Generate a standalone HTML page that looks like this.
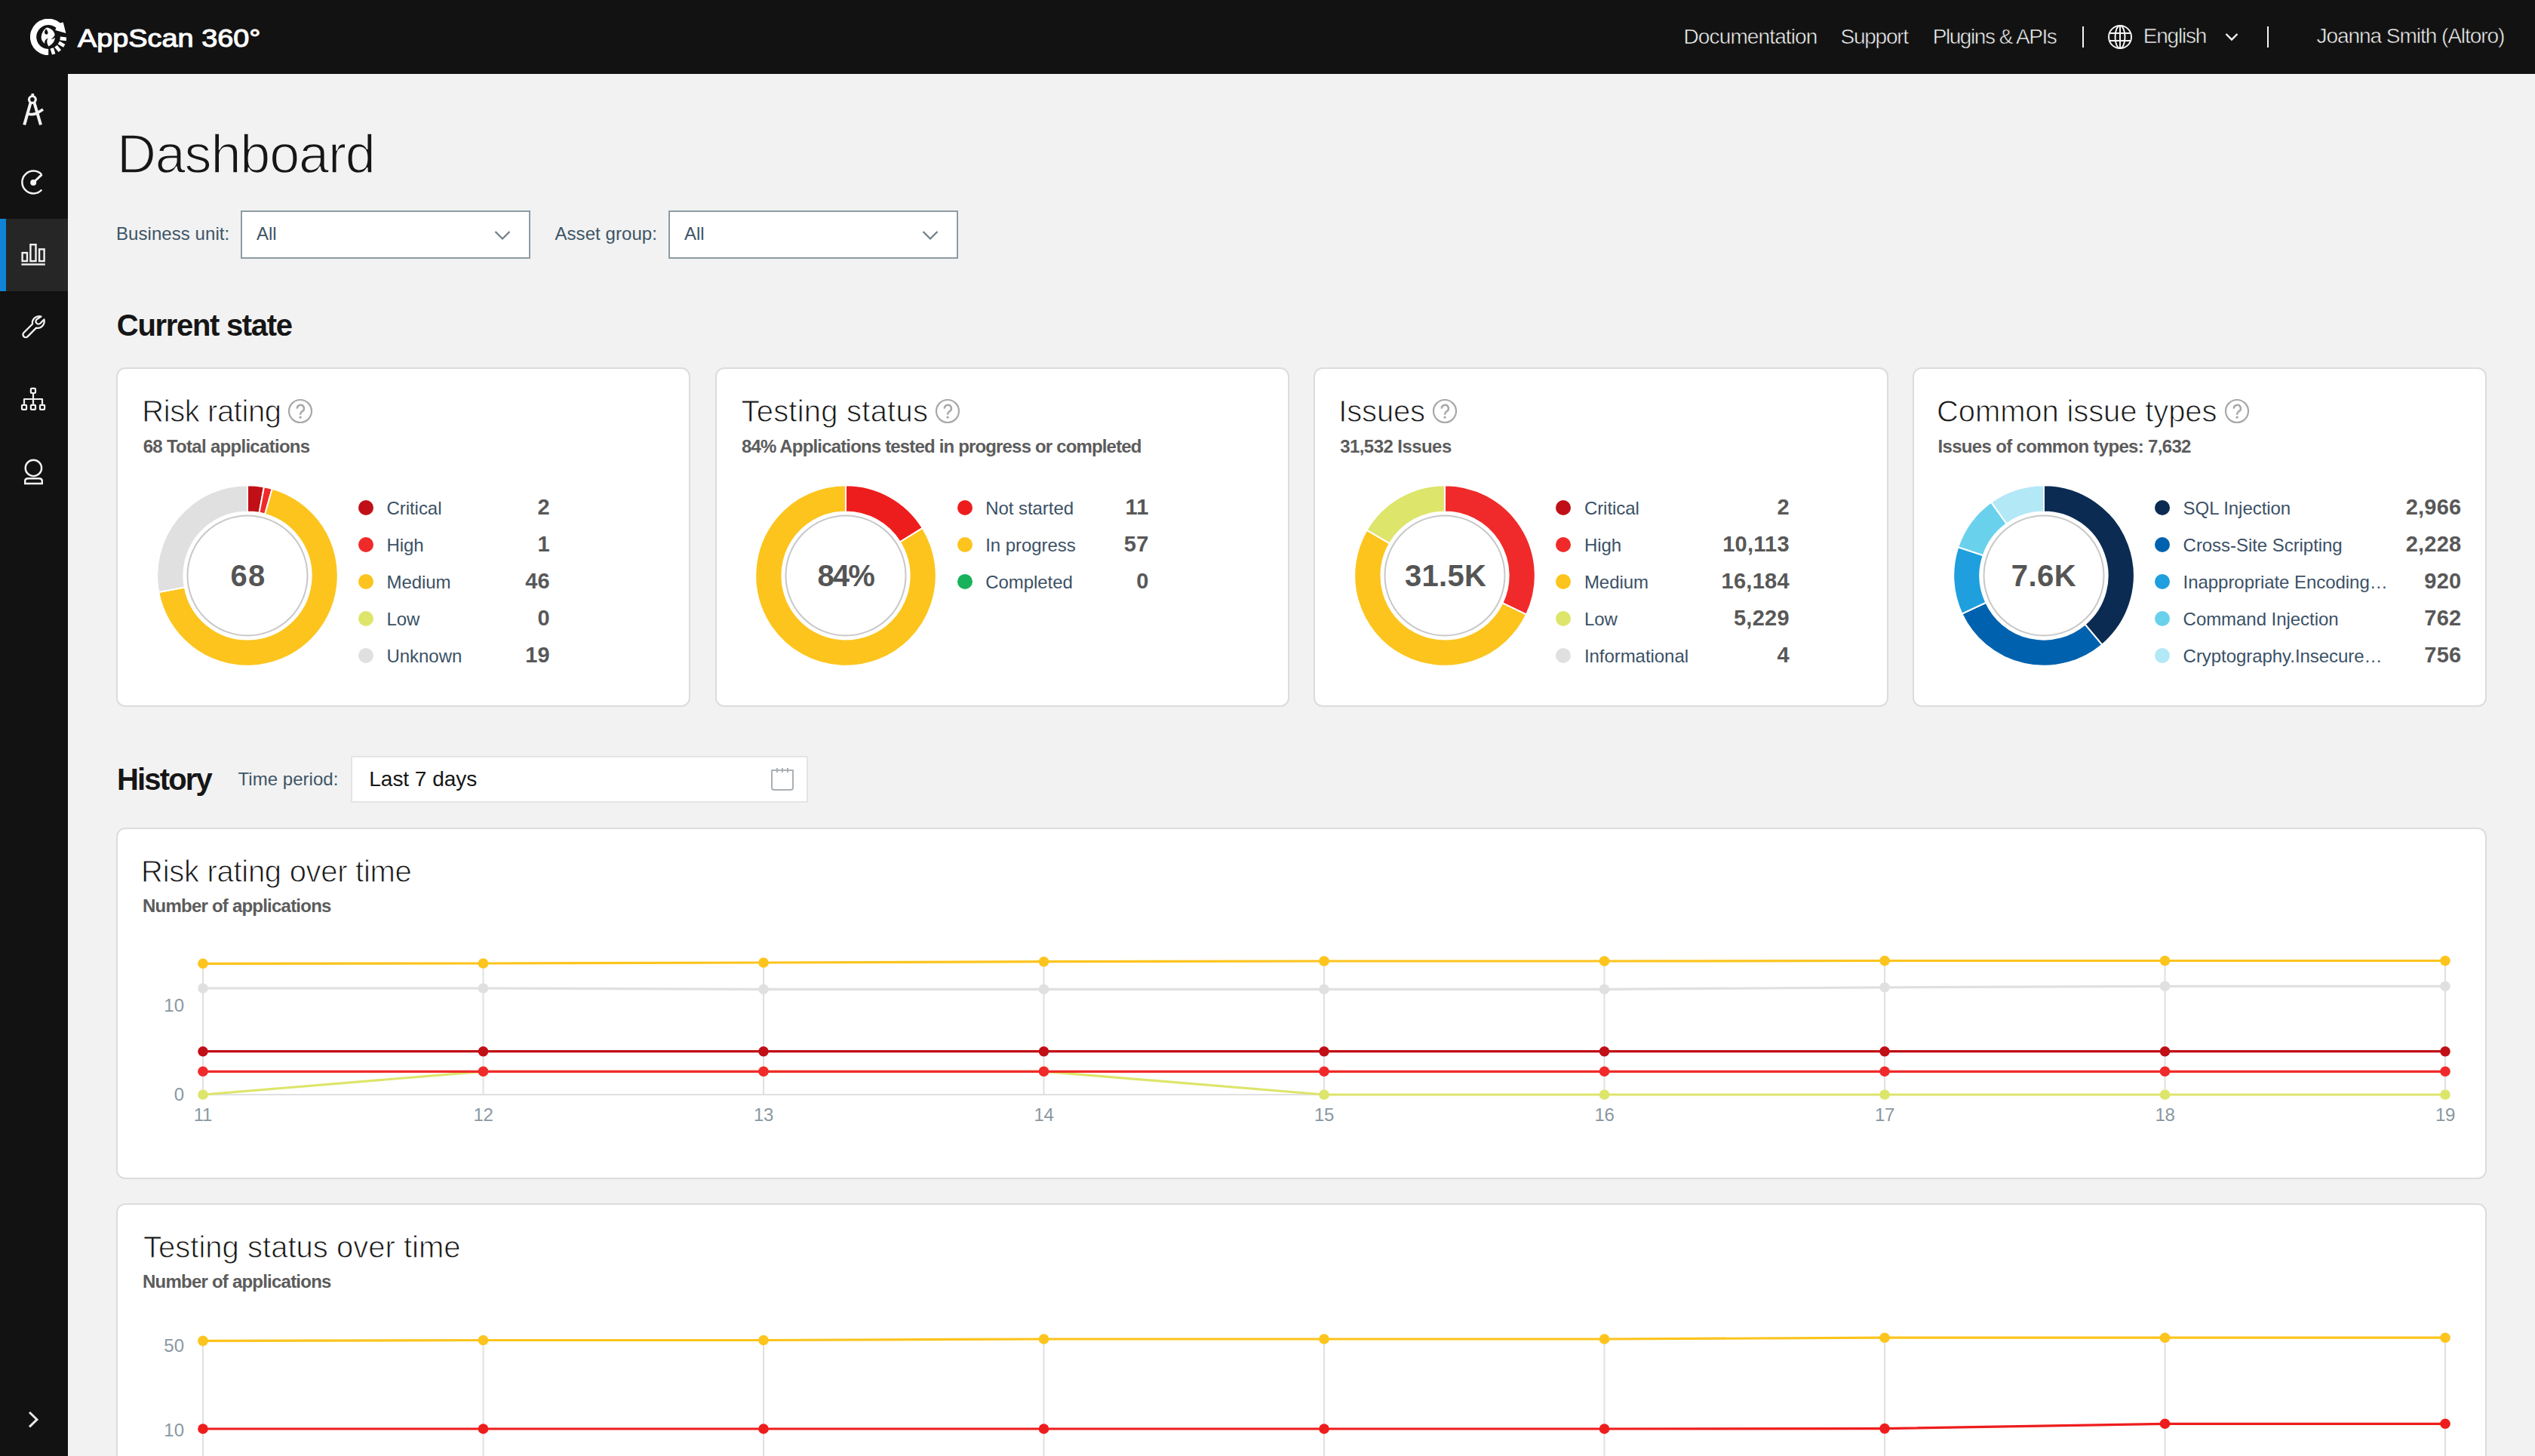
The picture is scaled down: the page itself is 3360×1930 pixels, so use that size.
<!DOCTYPE html>
<html><head><meta charset="utf-8"><style>
html,body{margin:0;padding:0;}
body{width:3360px;height:1930px;overflow:hidden;position:relative;background:#f2f2f2;font-family:"Liberation Sans", sans-serif;}
.t{position:absolute;white-space:nowrap;line-height:1;font-family:"Liberation Sans", sans-serif;}
</style></head><body>
<div style="position:absolute;left:0px;top:0px;width:3360px;height:98px;background:#121212"></div><div style="position:absolute;left:0px;top:98px;width:90px;height:1832px;background:#121212"></div><div style="position:absolute;left:0px;top:290px;width:90px;height:96px;background:#262626"></div><div style="position:absolute;left:0px;top:290px;width:8px;height:96px;background:#0f84d6"></div><svg style="position:absolute;left:40px;top:25px;" width="48" height="48" viewBox="0 0 48 48">
<path d="M 24.2 48.3 A 24.3 24.3 0 1 1 39.82 5.39 L 43.7 4.6 L 47.4 18.9 L 33.2 14.9 L 34.48 11.74 A 16 16 0 1 0 24.2 40.0 Z" fill="#fff"/>
<g stroke="#fff" stroke-width="4.6"><line x1="39.68" y1="25.90" x2="48.02" y2="26.92"/><line x1="37.84" y1="31.56" x2="45.19" y2="35.64"/><line x1="34.02" y1="36.12" x2="39.30" y2="42.65"/><line x1="28.76" y1="38.92" x2="31.22" y2="46.95"/></g>
<path d="M 22 11.4 C 28 12 33 17 33 23.5 C 33 30 28.5 34.5 24.5 36.4 C 22 33 21.5 29 23.5 25.5 C 20 27 18.5 30 19.5 33 C 15.5 30 14 26 15 22 C 16 17 19 13 22 11.4 Z" fill="#fff"/>
<path d="M 21.5 13.5 C 18.5 15.5 18.3 19.5 20.8 20.6 C 22.8 21.3 24.2 19.3 23.4 17.3 C 22.9 16 22.2 14.8 21.5 13.5 Z" fill="#121212"/>
<path d="M 33.2 20.5 C 31.6 24 29.8 25.8 27.6 26.6 C 30.5 27.2 32.8 25.6 33.6 23.2 Z" fill="#121212"/>
</svg><div class="t" style="left:103.15px;top:32.8px;font-size:34px;color:#fff;font-weight:400;letter-spacing:0.000px;-webkit-text-stroke:1.1px #fff;transform:scaleX(1.1135);transform-origin:0 0">AppScan 360°</div><div class="t" style="left:2231.50px;top:34.6px;font-size:28px;color:#f4f4f4;font-weight:400;letter-spacing:-0.871px;-webkit-text-stroke:0.6px #121212">Documentation</div><div class="t" style="left:2439.60px;top:34.6px;font-size:28px;color:#f4f4f4;font-weight:400;letter-spacing:-1.265px;-webkit-text-stroke:0.6px #121212">Support</div><div class="t" style="left:2561.70px;top:34.6px;font-size:28px;color:#f4f4f4;font-weight:400;letter-spacing:-1.431px;-webkit-text-stroke:0.6px #121212">Plugins &amp; APIs</div><div style="position:absolute;left:2760px;top:35px;width:2px;height:28px;background:#f4f4f4"></div><svg style="position:absolute;left:2794px;top:33px;" width="32" height="32" viewBox="0 0 32 32"><g fill="none" stroke="#f4f4f4" stroke-width="2">
<circle cx="16" cy="16" r="15"/><ellipse cx="16" cy="16" rx="6.5" ry="15"/>
<line x1="16" y1="1" x2="16" y2="31"/><line x1="1" y1="11" x2="31" y2="11"/><line x1="1" y1="21" x2="31" y2="21"/></g></svg><div class="t" style="left:2840.70px;top:34.2px;font-size:28px;color:#f4f4f4;font-weight:400;letter-spacing:-1.210px;-webkit-text-stroke:0.6px #121212">English</div><svg style="position:absolute;left:2949px;top:43px;" width="18" height="12" viewBox="0 0 18 12"><path d="M1.5 2 L9 9.5 L16.5 2" fill="none" stroke="#f4f4f4" stroke-width="2.4"/></svg><div style="position:absolute;left:3005px;top:35px;width:2px;height:28px;background:#f4f4f4"></div><div class="t" style="left:3070.60px;top:34.2px;font-size:28px;color:#f4f4f4;font-weight:400;letter-spacing:-1.053px;-webkit-text-stroke:0.6px #121212">Joanna Smith (Altoro)</div><svg style="position:absolute;left:20px;top:115px;" width="50" height="60" viewBox="0 0 50 60"><g fill="none" stroke="#f2f2f2" stroke-width="3.6">
<line x1="23.3" y1="9" x2="23.3" y2="14"/>
<circle cx="22.9" cy="16.9" r="4.4" stroke-width="3.2"/>
<line x1="20.6" y1="21" x2="12.2" y2="50.5" stroke-width="4"/>
<line x1="25.4" y1="21" x2="34" y2="50.5" stroke-width="4"/>
<path d="M 17.5 36 Q 24 37.5 29 35 L 37 30" stroke-width="3.8"/>
</g></svg><svg style="position:absolute;left:20px;top:215px;" width="50" height="50" viewBox="0 0 50 50"><g fill="none" stroke="#f2f2f2" stroke-width="2.5">
<path d="M 35.3 16.5 A 14.9 14.9 0 1 0 35.3 36.5"/>
<line x1="24.2" y1="27" x2="35.5" y2="16.3" stroke-width="3"/>
</g><circle cx="24.2" cy="27" r="4" fill="#f2f2f2"/></svg><svg style="position:absolute;left:20px;top:310px;" width="50" height="50" viewBox="0 0 50 50"><g fill="none" stroke="#f2f2f2" stroke-width="2.4">
<rect x="9.6" y="25.1" width="6.4" height="11.0"/>
<rect x="20.4" y="14.2" width="7.1" height="21.9"/>
<rect x="32.1" y="20.4" width="6.5" height="15.7"/>
<line x1="8.4" y1="40.5" x2="39.8" y2="40.5"/>
</g></svg><svg style="position:absolute;left:20px;top:408px;" width="50" height="50" viewBox="0 0 50 50"><g fill="none" stroke="#f2f2f2" stroke-width="2.3" stroke-linejoin="round">
<path d="M 34.5 11.5 A 9 9 0 0 0 23 21.5 L 11.5 33 A 3.6 3.6 0 0 0 16.6 38.1 L 28 26.6 A 9 9 0 0 0 38.4 15.5 L 33.5 20.5 A 3.5 3.5 0 0 1 28.5 15.5 Z"/>
</g></svg><svg style="position:absolute;left:20px;top:503px;" width="50" height="50" viewBox="0 0 50 50"><g fill="none" stroke="#f2f2f2" stroke-width="2.2" stroke-linejoin="round">
<rect x="20.9" y="11.9" width="6.1" height="6.1" rx="1"/>
<rect x="9" y="33.8" width="6.1" height="6.1" rx="1"/>
<rect x="20.9" y="33.8" width="6.1" height="6.1" rx="1"/>
<rect x="33" y="33.8" width="6.1" height="6.1" rx="1"/>
<path d="M 24 19 L 24 32.7 M 12 32.7 L 12 26 L 36 26 L 36 32.7"/>
</g></svg><svg style="position:absolute;left:20px;top:600px;" width="50" height="50" viewBox="0 0 50 50"><g fill="none" stroke="#f2f2f2" stroke-width="2.4">
<circle cx="24.4" cy="20.4" r="10.7"/>
<path d="M 13.2 41 L 13.2 37.5 Q 13.2 34.2 17 34.2 L 32 34.2 Q 35.8 34.2 35.8 37.5 L 35.8 41 Z"/>
</g></svg><svg style="position:absolute;left:30px;top:1865px;" width="30" height="34" viewBox="0 0 30 34"><path d="M 9 7 L 19 16.7 L 9 26.4" fill="none" stroke="#e8e8e8" stroke-width="3"/></svg><div class="t" style="left:154.90px;top:167.8px;font-size:72px;color:#161616;font-weight:400;letter-spacing:-1.161px;-webkit-text-stroke:1.6px #f2f2f2">Dashboard</div><div class="t" style="left:154.00px;top:298.4px;font-size:24px;color:#3d5566;font-weight:400;letter-spacing:0.058px;">Business unit:</div><div style="position:absolute;left:319px;top:279px;width:384px;height:64px;background:#fff;border:2px solid #8d9ba4;box-sizing:border-box"></div><div class="t" style="left:340.0px;top:298.4px;font-size:24px;color:#3d5566;font-weight:400;letter-spacing:0px;">All</div><svg style="position:absolute;left:654.5px;top:300px;" width="22" height="22" viewBox="0 0 22 22"><path d="M 1.5 7 L 11 16.5 L 20.5 7" fill="none" stroke="#6f7d86" stroke-width="2.2"/></svg><div class="t" style="left:735.50px;top:298.4px;font-size:24px;color:#3d5566;font-weight:400;letter-spacing:0.057px;">Asset group:</div><div style="position:absolute;left:886px;top:279px;width:384px;height:64px;background:#fff;border:2px solid #8d9ba4;box-sizing:border-box"></div><div class="t" style="left:907.0px;top:298.4px;font-size:24px;color:#3d5566;font-weight:400;letter-spacing:0px;">All</div><svg style="position:absolute;left:1222px;top:300px;" width="22" height="22" viewBox="0 0 22 22"><path d="M 1.5 7 L 11 16.5 L 20.5 7" fill="none" stroke="#6f7d86" stroke-width="2.2"/></svg><div class="t" style="left:154.80px;top:410.9px;font-size:40px;color:#161616;font-weight:700;letter-spacing:-1.308px;">Current state</div><div style="position:absolute;left:154.0px;top:487px;width:761.3px;height:450px;background:#fff;border:2px solid #dcdcdc;border-radius:12px;box-sizing:border-box"></div><div class="t" style="left:188.35px;top:525.0px;font-size:40px;color:#161616;font-weight:400;letter-spacing:-0.430px;-webkit-text-stroke:0.9px #fff">Risk rating</div><div class="t" style="left:189.70px;top:579.6px;font-size:24px;color:#5c5c5c;font-weight:700;letter-spacing:-0.708px;">68 Total applications</div><svg style="position:absolute;left:381px;top:527.8px;" width="34" height="34" viewBox="0 0 34 34"><circle cx="17" cy="17" r="15" fill="none" stroke="#a8a8a8" stroke-width="2.2"/><path d="M 12.9 13.6 A 4.5 4.5 0 1 1 19.5 17.3 C 17.9 18.4 17.1 19.2 17.1 21 L 17.1 21.8" fill="none" stroke="#a8a8a8" stroke-width="2.6"/><circle cx="17.1" cy="25.2" r="1.6" fill="#a8a8a8"/></svg><svg style="position:absolute;left:197.7px;top:633px;" width="260" height="260" viewBox="0 0 260 260"><path d="M130.00 10.20 A119.8 119.8 0 0 1 152.01 12.24 L145.55 46.84 A84.6 84.6 0 0 0 130.00 45.40 Z" fill="#c00f17" stroke="#fff" stroke-width="2"/><path d="M152.01 12.24 A119.8 119.8 0 0 1 162.78 14.77 L153.15 48.63 A84.6 84.6 0 0 0 145.55 46.84 Z" fill="#f02a2a" stroke="#fff" stroke-width="2"/><path d="M162.78 14.77 A119.8 119.8 0 1 1 12.24 152.01 L46.84 145.55 A84.6 84.6 0 1 0 153.15 48.63 Z" fill="#fcc41d" stroke="#fff" stroke-width="2"/><path d="M12.24 152.01 A119.8 119.8 0 0 1 130.00 10.20 L130.00 45.40 A84.6 84.6 0 0 0 46.84 145.55 Z" fill="#e0e0e0" stroke="#fff" stroke-width="2"/><circle cx="130" cy="130" r="79.5" fill="#fff" stroke="#c8c8c8" stroke-width="2"/></svg><div class="t" style="left:305.50px;top:742.7px;font-size:40px;color:#555;font-weight:700;letter-spacing:1.254px;">68</div><div style="position:absolute;left:475.0px;top:663px;width:20px;height:20px;background:#c00f17;border-radius:50%"></div><div class="t" style="left:512.5px;top:661.7px;font-size:24px;color:#3b5166;font-weight:400;letter-spacing:-0.05px;">Critical</div><div class="t" style="right:2631.1px;top:658.3px;font-size:29px;color:#585858;font-weight:700;letter-spacing:0.25px;">2</div><div style="position:absolute;left:475.0px;top:712px;width:20px;height:20px;background:#f02a2a;border-radius:50%"></div><div class="t" style="left:512.5px;top:710.7px;font-size:24px;color:#3b5166;font-weight:400;letter-spacing:-0.05px;">High</div><div class="t" style="right:2631.1px;top:707.3px;font-size:29px;color:#585858;font-weight:700;letter-spacing:0.25px;">1</div><div style="position:absolute;left:475.0px;top:761px;width:20px;height:20px;background:#fcc41d;border-radius:50%"></div><div class="t" style="left:512.5px;top:759.7px;font-size:24px;color:#3b5166;font-weight:400;letter-spacing:-0.05px;">Medium</div><div class="t" style="right:2631.1px;top:756.3px;font-size:29px;color:#585858;font-weight:700;letter-spacing:0.25px;">46</div><div style="position:absolute;left:475.0px;top:810px;width:20px;height:20px;background:#dde56b;border-radius:50%"></div><div class="t" style="left:512.5px;top:808.7px;font-size:24px;color:#3b5166;font-weight:400;letter-spacing:-0.05px;">Low</div><div class="t" style="right:2631.1px;top:805.3px;font-size:29px;color:#585858;font-weight:700;letter-spacing:0.25px;">0</div><div style="position:absolute;left:475.0px;top:859px;width:20px;height:20px;background:#e0e0e0;border-radius:50%"></div><div class="t" style="left:512.5px;top:857.7px;font-size:24px;color:#3b5166;font-weight:400;letter-spacing:-0.05px;">Unknown</div><div class="t" style="right:2631.1px;top:854.3px;font-size:29px;color:#585858;font-weight:700;letter-spacing:0.25px;">19</div><div style="position:absolute;left:947.7px;top:487px;width:761.3px;height:450px;background:#fff;border:2px solid #dcdcdc;border-radius:12px;box-sizing:border-box"></div><div class="t" style="left:982.45px;top:525.0px;font-size:40px;color:#161616;font-weight:400;letter-spacing:0.225px;-webkit-text-stroke:0.9px #fff">Testing status</div><div class="t" style="left:982.90px;top:579.6px;font-size:24px;color:#5c5c5c;font-weight:700;letter-spacing:-0.837px;">84% Applications tested in progress or completed</div><svg style="position:absolute;left:1238.7px;top:527.8px;" width="34" height="34" viewBox="0 0 34 34"><circle cx="17" cy="17" r="15" fill="none" stroke="#a8a8a8" stroke-width="2.2"/><path d="M 12.9 13.6 A 4.5 4.5 0 1 1 19.5 17.3 C 17.9 18.4 17.1 19.2 17.1 21 L 17.1 21.8" fill="none" stroke="#a8a8a8" stroke-width="2.6"/><circle cx="17.1" cy="25.2" r="1.6" fill="#a8a8a8"/></svg><svg style="position:absolute;left:991.4000000000001px;top:633px;" width="260" height="260" viewBox="0 0 260 260"><path d="M130.00 10.20 A119.8 119.8 0 0 1 231.86 66.93 L201.93 85.46 A84.6 84.6 0 0 0 130.00 45.40 Z" fill="#ee1d1d" stroke="#fff" stroke-width="2"/><path d="M231.86 66.93 A119.8 119.8 0 1 1 130.00 10.20 L130.00 45.40 A84.6 84.6 0 1 0 201.93 85.46 Z" fill="#fcc41d" stroke="#fff" stroke-width="2"/><circle cx="130" cy="130" r="79.5" fill="#fff" stroke="#c8c8c8" stroke-width="2"/></svg><div class="t" style="left:1083.40px;top:742.7px;font-size:40px;color:#555;font-weight:700;letter-spacing:-1.796px;">84%</div><div style="position:absolute;left:1268.7px;top:663px;width:20px;height:20px;background:#ee1d1d;border-radius:50%"></div><div class="t" style="left:1306.2px;top:661.7px;font-size:24px;color:#3b5166;font-weight:400;letter-spacing:-0.05px;">Not started</div><div class="t" style="right:1837.4px;top:658.3px;font-size:29px;color:#585858;font-weight:700;letter-spacing:0.25px;">11</div><div style="position:absolute;left:1268.7px;top:712px;width:20px;height:20px;background:#fcc41d;border-radius:50%"></div><div class="t" style="left:1306.2px;top:710.7px;font-size:24px;color:#3b5166;font-weight:400;letter-spacing:-0.05px;">In progress</div><div class="t" style="right:1837.4px;top:707.3px;font-size:29px;color:#585858;font-weight:700;letter-spacing:0.25px;">57</div><div style="position:absolute;left:1268.7px;top:761px;width:20px;height:20px;background:#17b25a;border-radius:50%"></div><div class="t" style="left:1306.2px;top:759.7px;font-size:24px;color:#3b5166;font-weight:400;letter-spacing:-0.05px;">Completed</div><div class="t" style="right:1837.4px;top:756.3px;font-size:29px;color:#585858;font-weight:700;letter-spacing:0.25px;">0</div><div style="position:absolute;left:1741.4px;top:487px;width:761.3px;height:450px;background:#fff;border:2px solid #dcdcdc;border-radius:12px;box-sizing:border-box"></div><div class="t" style="left:1774.35px;top:525.0px;font-size:40px;color:#161616;font-weight:400;letter-spacing:-0.181px;-webkit-text-stroke:0.9px #fff">Issues</div><div class="t" style="left:1776.20px;top:579.6px;font-size:24px;color:#5c5c5c;font-weight:700;letter-spacing:-0.562px;">31,532 Issues</div><svg style="position:absolute;left:1898px;top:527.8px;" width="34" height="34" viewBox="0 0 34 34"><circle cx="17" cy="17" r="15" fill="none" stroke="#a8a8a8" stroke-width="2.2"/><path d="M 12.9 13.6 A 4.5 4.5 0 1 1 19.5 17.3 C 17.9 18.4 17.1 19.2 17.1 21 L 17.1 21.8" fill="none" stroke="#a8a8a8" stroke-width="2.6"/><circle cx="17.1" cy="25.2" r="1.6" fill="#a8a8a8"/></svg><svg style="position:absolute;left:1785.1000000000001px;top:633px;" width="260" height="260" viewBox="0 0 260 260"><path d="M130.05 10.20 A119.8 119.8 0 0 1 238.15 181.54 L206.37 166.40 A84.6 84.6 0 0 0 130.03 45.40 Z" fill="#f02a2a" stroke="#fff" stroke-width="2"/><path d="M238.15 181.54 A119.8 119.8 0 1 1 26.52 69.64 L56.92 87.37 A84.6 84.6 0 1 0 206.37 166.40 Z" fill="#fcc41d" stroke="#fff" stroke-width="2"/><path d="M26.52 69.64 A119.8 119.8 0 0 1 129.90 10.20 L129.93 45.40 A84.6 84.6 0 0 0 56.92 87.37 Z" fill="#dde56b" stroke="#fff" stroke-width="2"/><circle cx="130" cy="130" r="79.5" fill="#fff" stroke="#c8c8c8" stroke-width="2"/></svg><div class="t" style="left:1861.90px;top:742.7px;font-size:40px;color:#555;font-weight:700;letter-spacing:0.312px;">31.5K</div><div style="position:absolute;left:2062.4px;top:663px;width:20px;height:20px;background:#c00f17;border-radius:50%"></div><div class="t" style="left:2099.9px;top:661.7px;font-size:24px;color:#3b5166;font-weight:400;letter-spacing:-0.05px;">Critical</div><div class="t" style="right:988.2px;top:658.3px;font-size:29px;color:#585858;font-weight:700;letter-spacing:0.25px;">2</div><div style="position:absolute;left:2062.4px;top:712px;width:20px;height:20px;background:#f02a2a;border-radius:50%"></div><div class="t" style="left:2099.9px;top:710.7px;font-size:24px;color:#3b5166;font-weight:400;letter-spacing:-0.05px;">High</div><div class="t" style="right:988.2px;top:707.3px;font-size:29px;color:#585858;font-weight:700;letter-spacing:0.25px;">10,113</div><div style="position:absolute;left:2062.4px;top:761px;width:20px;height:20px;background:#fcc41d;border-radius:50%"></div><div class="t" style="left:2099.9px;top:759.7px;font-size:24px;color:#3b5166;font-weight:400;letter-spacing:-0.05px;">Medium</div><div class="t" style="right:988.2px;top:756.3px;font-size:29px;color:#585858;font-weight:700;letter-spacing:0.25px;">16,184</div><div style="position:absolute;left:2062.4px;top:810px;width:20px;height:20px;background:#dde56b;border-radius:50%"></div><div class="t" style="left:2099.9px;top:808.7px;font-size:24px;color:#3b5166;font-weight:400;letter-spacing:-0.05px;">Low</div><div class="t" style="right:988.2px;top:805.3px;font-size:29px;color:#585858;font-weight:700;letter-spacing:0.25px;">5,229</div><div style="position:absolute;left:2062.4px;top:859px;width:20px;height:20px;background:#e0e0e0;border-radius:50%"></div><div class="t" style="left:2099.9px;top:857.7px;font-size:24px;color:#3b5166;font-weight:400;letter-spacing:-0.05px;">Informational</div><div class="t" style="right:988.2px;top:854.3px;font-size:29px;color:#585858;font-weight:700;letter-spacing:0.25px;">4</div><div style="position:absolute;left:2535.1000000000004px;top:487px;width:761.3px;height:450px;background:#fff;border:2px solid #dcdcdc;border-radius:12px;box-sizing:border-box"></div><div class="t" style="left:2567.05px;top:525.0px;font-size:40px;color:#161616;font-weight:400;letter-spacing:-0.122px;-webkit-text-stroke:0.9px #fff">Common issue types</div><div class="t" style="left:2568.50px;top:579.6px;font-size:24px;color:#5c5c5c;font-weight:700;letter-spacing:-0.673px;">Issues of common types: 7,632</div><svg style="position:absolute;left:2947.6px;top:527.8px;" width="34" height="34" viewBox="0 0 34 34"><circle cx="17" cy="17" r="15" fill="none" stroke="#a8a8a8" stroke-width="2.2"/><path d="M 12.9 13.6 A 4.5 4.5 0 1 1 19.5 17.3 C 17.9 18.4 17.1 19.2 17.1 21 L 17.1 21.8" fill="none" stroke="#a8a8a8" stroke-width="2.6"/><circle cx="17.1" cy="25.2" r="1.6" fill="#a8a8a8"/></svg><svg style="position:absolute;left:2578.8px;top:633px;" width="260" height="260" viewBox="0 0 260 260"><path d="M130.00 10.20 A119.8 119.8 0 0 1 207.16 221.65 L184.49 194.72 A84.6 84.6 0 0 0 130.00 45.40 Z" fill="#0b2b52" stroke="#fff" stroke-width="2"/><path d="M207.16 221.65 A119.8 119.8 0 0 1 21.42 180.63 L53.33 165.75 A84.6 84.6 0 0 0 184.49 194.72 Z" fill="#0062ae" stroke="#fff" stroke-width="2"/><path d="M21.42 180.63 A119.8 119.8 0 0 1 16.32 92.19 L49.72 103.30 A84.6 84.6 0 0 0 53.33 165.75 Z" fill="#1f9fdd" stroke="#fff" stroke-width="2"/><path d="M16.32 92.19 A119.8 119.8 0 0 1 60.16 32.66 L80.68 61.26 A84.6 84.6 0 0 0 49.72 103.30 Z" fill="#6ad1ed" stroke="#fff" stroke-width="2"/><path d="M60.16 32.66 A119.8 119.8 0 0 1 130.00 10.20 L130.00 45.40 A84.6 84.6 0 0 0 80.68 61.26 Z" fill="#b3e8f6" stroke="#fff" stroke-width="2"/><circle cx="130" cy="130" r="79.5" fill="#fff" stroke="#c8c8c8" stroke-width="2"/></svg><div class="t" style="left:2665.70px;top:742.7px;font-size:40px;color:#555;font-weight:700;letter-spacing:0.498px;">7.6K</div><div style="position:absolute;left:2856.1000000000004px;top:663px;width:20px;height:20px;background:#0b2b52;border-radius:50%"></div><div class="t" style="left:2893.6px;top:661.7px;font-size:24px;color:#3b5166;font-weight:400;letter-spacing:-0.05px;">SQL Injection</div><div class="t" style="right:97.5px;top:658.3px;font-size:29px;color:#585858;font-weight:700;letter-spacing:0.25px;">2,966</div><div style="position:absolute;left:2856.1000000000004px;top:712px;width:20px;height:20px;background:#0062ae;border-radius:50%"></div><div class="t" style="left:2893.6px;top:710.7px;font-size:24px;color:#3b5166;font-weight:400;letter-spacing:-0.05px;">Cross-Site Scripting</div><div class="t" style="right:97.5px;top:707.3px;font-size:29px;color:#585858;font-weight:700;letter-spacing:0.25px;">2,228</div><div style="position:absolute;left:2856.1000000000004px;top:761px;width:20px;height:20px;background:#1f9fdd;border-radius:50%"></div><div class="t" style="left:2893.6px;top:759.7px;font-size:24px;color:#3b5166;font-weight:400;letter-spacing:-0.05px;">Inappropriate Encoding…</div><div class="t" style="right:97.5px;top:756.3px;font-size:29px;color:#585858;font-weight:700;letter-spacing:0.25px;">920</div><div style="position:absolute;left:2856.1000000000004px;top:810px;width:20px;height:20px;background:#6ad1ed;border-radius:50%"></div><div class="t" style="left:2893.6px;top:808.7px;font-size:24px;color:#3b5166;font-weight:400;letter-spacing:-0.05px;">Command Injection</div><div class="t" style="right:97.5px;top:805.3px;font-size:29px;color:#585858;font-weight:700;letter-spacing:0.25px;">762</div><div style="position:absolute;left:2856.1000000000004px;top:859px;width:20px;height:20px;background:#b3e8f6;border-radius:50%"></div><div class="t" style="left:2893.6px;top:857.7px;font-size:24px;color:#3b5166;font-weight:400;letter-spacing:-0.05px;">Cryptography.Insecure…</div><div class="t" style="right:97.5px;top:854.3px;font-size:29px;color:#585858;font-weight:700;letter-spacing:0.25px;">756</div><div class="t" style="left:155.00px;top:1013.4px;font-size:40px;color:#161616;font-weight:700;letter-spacing:-1.828px;">History</div><div class="t" style="left:315.50px;top:1021.4px;font-size:24px;color:#3d5566;font-weight:400;letter-spacing:0.034px;">Time period:</div><div style="position:absolute;left:465px;top:1002px;width:606px;height:62px;background:#fff;border:2px solid #e4e4e4;box-sizing:border-box"></div><div class="t" style="left:489.30px;top:1019.0px;font-size:28px;color:#161616;font-weight:400;letter-spacing:-0.030px;">Last 7 days</div><svg style="position:absolute;left:1020px;top:1016px;" width="34" height="34" viewBox="0 0 34 34"><g fill="none" stroke="#aab1b5" stroke-width="2"><path d="M 3 5 L 3 28 Q 3 31 6 31 L 28 31 Q 31 31 31 28 L 31 5 Z" stroke-linejoin="round"/><line x1="10" y1="2" x2="10" y2="8"/><line x1="17" y1="2" x2="17" y2="8"/><line x1="24" y1="2" x2="24" y2="8"/></g></svg><div style="position:absolute;left:154px;top:1097px;width:3142px;height:466px;background:#fff;border:2px solid #dcdcdc;border-radius:12px;box-sizing:border-box"></div><div class="t" style="left:187.05px;top:1134.5px;font-size:40px;color:#161616;font-weight:400;letter-spacing:-0.290px;-webkit-text-stroke:0.9px #fff">Risk rating over time</div><div class="t" style="left:189.00px;top:1188.9px;font-size:24px;color:#5c5c5c;font-weight:700;letter-spacing:-0.778px;">Number of applications</div><div style="position:absolute;left:154px;top:1595px;width:3142px;height:400px;background:#fff;border:2px solid #dcdcdc;border-radius:12px;box-sizing:border-box"></div><div class="t" style="left:190.05px;top:1632.5px;font-size:40px;color:#161616;font-weight:400;letter-spacing:0.012px;-webkit-text-stroke:0.9px #fff">Testing status over time</div><div class="t" style="left:189.00px;top:1686.9px;font-size:24px;color:#5c5c5c;font-weight:700;letter-spacing:-0.778px;">Number of applications</div><svg style="position:absolute;left:0;top:0" width="3360" height="1930"><line x1="269.0" y1="1274" x2="269.0" y2="1451" stroke="#e0e0e0" stroke-width="2"/><line x1="640.5" y1="1274" x2="640.5" y2="1451" stroke="#e0e0e0" stroke-width="2"/><line x1="1012.0" y1="1274" x2="1012.0" y2="1451" stroke="#e0e0e0" stroke-width="2"/><line x1="1383.5" y1="1274" x2="1383.5" y2="1451" stroke="#e0e0e0" stroke-width="2"/><line x1="1755.0" y1="1274" x2="1755.0" y2="1451" stroke="#e0e0e0" stroke-width="2"/><line x1="2126.5" y1="1274" x2="2126.5" y2="1451" stroke="#e0e0e0" stroke-width="2"/><line x1="2498.0" y1="1274" x2="2498.0" y2="1451" stroke="#e0e0e0" stroke-width="2"/><line x1="2869.5" y1="1274" x2="2869.5" y2="1451" stroke="#e0e0e0" stroke-width="2"/><line x1="3241.0" y1="1274" x2="3241.0" y2="1451" stroke="#e0e0e0" stroke-width="2"/><line x1="269.0" y1="1451" x2="3241.0" y2="1451" stroke="#e0e0e0" stroke-width="2"/><polyline points="269.0,1310.0 640.5,1310.0 1012.0,1311.3 1383.5,1311.3 1755.0,1311.3 2126.5,1311.3 2498.0,1308.8 2869.5,1307.3 3241.0,1307.3" fill="none" stroke="#e0e0e0" stroke-width="3.2" stroke-linejoin="round"/><circle cx="269.0" cy="1310.0" r="6.8" fill="#e0e0e0"/><circle cx="640.5" cy="1310.0" r="6.8" fill="#e0e0e0"/><circle cx="1012.0" cy="1311.3" r="6.8" fill="#e0e0e0"/><circle cx="1383.5" cy="1311.3" r="6.8" fill="#e0e0e0"/><circle cx="1755.0" cy="1311.3" r="6.8" fill="#e0e0e0"/><circle cx="2126.5" cy="1311.3" r="6.8" fill="#e0e0e0"/><circle cx="2498.0" cy="1308.8" r="6.8" fill="#e0e0e0"/><circle cx="2869.5" cy="1307.3" r="6.8" fill="#e0e0e0"/><circle cx="3241.0" cy="1307.3" r="6.8" fill="#e0e0e0"/><polyline points="269.0,1451.0 640.5,1420.3 1012.0,1420.3 1383.5,1420.3 1755.0,1451.0 2126.5,1451.0 2498.0,1451.0 2869.5,1451.0 3241.0,1451.0" fill="none" stroke="#dde56b" stroke-width="3.2" stroke-linejoin="round"/><circle cx="269.0" cy="1451.0" r="6.8" fill="#dde56b"/><circle cx="640.5" cy="1420.3" r="6.8" fill="#dde56b"/><circle cx="1012.0" cy="1420.3" r="6.8" fill="#dde56b"/><circle cx="1383.5" cy="1420.3" r="6.8" fill="#dde56b"/><circle cx="1755.0" cy="1451.0" r="6.8" fill="#dde56b"/><circle cx="2126.5" cy="1451.0" r="6.8" fill="#dde56b"/><circle cx="2498.0" cy="1451.0" r="6.8" fill="#dde56b"/><circle cx="2869.5" cy="1451.0" r="6.8" fill="#dde56b"/><circle cx="3241.0" cy="1451.0" r="6.8" fill="#dde56b"/><polyline points="269.0,1420.3 640.5,1420.3 1012.0,1420.3 1383.5,1420.3 1755.0,1420.3 2126.5,1420.3 2498.0,1420.3 2869.5,1420.3 3241.0,1420.3" fill="none" stroke="#f02a2a" stroke-width="3.2" stroke-linejoin="round"/><circle cx="269.0" cy="1420.3" r="6.8" fill="#f02a2a"/><circle cx="640.5" cy="1420.3" r="6.8" fill="#f02a2a"/><circle cx="1012.0" cy="1420.3" r="6.8" fill="#f02a2a"/><circle cx="1383.5" cy="1420.3" r="6.8" fill="#f02a2a"/><circle cx="1755.0" cy="1420.3" r="6.8" fill="#f02a2a"/><circle cx="2126.5" cy="1420.3" r="6.8" fill="#f02a2a"/><circle cx="2498.0" cy="1420.3" r="6.8" fill="#f02a2a"/><circle cx="2869.5" cy="1420.3" r="6.8" fill="#f02a2a"/><circle cx="3241.0" cy="1420.3" r="6.8" fill="#f02a2a"/><polyline points="269.0,1393.7 640.5,1393.7 1012.0,1393.7 1383.5,1393.7 1755.0,1393.7 2126.5,1393.7 2498.0,1393.7 2869.5,1393.7 3241.0,1393.7" fill="none" stroke="#c00f17" stroke-width="3.2" stroke-linejoin="round"/><circle cx="269.0" cy="1393.7" r="6.8" fill="#c00f17"/><circle cx="640.5" cy="1393.7" r="6.8" fill="#c00f17"/><circle cx="1012.0" cy="1393.7" r="6.8" fill="#c00f17"/><circle cx="1383.5" cy="1393.7" r="6.8" fill="#c00f17"/><circle cx="1755.0" cy="1393.7" r="6.8" fill="#c00f17"/><circle cx="2126.5" cy="1393.7" r="6.8" fill="#c00f17"/><circle cx="2498.0" cy="1393.7" r="6.8" fill="#c00f17"/><circle cx="2869.5" cy="1393.7" r="6.8" fill="#c00f17"/><circle cx="3241.0" cy="1393.7" r="6.8" fill="#c00f17"/><polyline points="269.0,1277.3 640.5,1277.0 1012.0,1276.0 1383.5,1274.7 1755.0,1274.0 2126.5,1274.0 2498.0,1273.5 2869.5,1273.5 3241.0,1273.5" fill="none" stroke="#fcc41d" stroke-width="3.2" stroke-linejoin="round"/><circle cx="269.0" cy="1277.3" r="6.8" fill="#fcc41d"/><circle cx="640.5" cy="1277.0" r="6.8" fill="#fcc41d"/><circle cx="1012.0" cy="1276.0" r="6.8" fill="#fcc41d"/><circle cx="1383.5" cy="1274.7" r="6.8" fill="#fcc41d"/><circle cx="1755.0" cy="1274.0" r="6.8" fill="#fcc41d"/><circle cx="2126.5" cy="1274.0" r="6.8" fill="#fcc41d"/><circle cx="2498.0" cy="1273.5" r="6.8" fill="#fcc41d"/><circle cx="2869.5" cy="1273.5" r="6.8" fill="#fcc41d"/><circle cx="3241.0" cy="1273.5" r="6.8" fill="#fcc41d"/><line x1="269.0" y1="1773" x2="269.0" y2="1940" stroke="#e0e0e0" stroke-width="2"/><line x1="640.5" y1="1773" x2="640.5" y2="1940" stroke="#e0e0e0" stroke-width="2"/><line x1="1012.0" y1="1773" x2="1012.0" y2="1940" stroke="#e0e0e0" stroke-width="2"/><line x1="1383.5" y1="1773" x2="1383.5" y2="1940" stroke="#e0e0e0" stroke-width="2"/><line x1="1755.0" y1="1773" x2="1755.0" y2="1940" stroke="#e0e0e0" stroke-width="2"/><line x1="2126.5" y1="1773" x2="2126.5" y2="1940" stroke="#e0e0e0" stroke-width="2"/><line x1="2498.0" y1="1773" x2="2498.0" y2="1940" stroke="#e0e0e0" stroke-width="2"/><line x1="2869.5" y1="1773" x2="2869.5" y2="1940" stroke="#e0e0e0" stroke-width="2"/><line x1="3241.0" y1="1773" x2="3241.0" y2="1940" stroke="#e0e0e0" stroke-width="2"/><polyline points="269.0,1894.0 640.5,1894.0 1012.0,1894.0 1383.5,1894.0 1755.0,1894.0 2126.5,1894.0 2498.0,1893.6 2869.5,1887.3 3241.0,1887.3" fill="none" stroke="#ee1d1d" stroke-width="3.2" stroke-linejoin="round"/><circle cx="269.0" cy="1894.0" r="6.8" fill="#ee1d1d"/><circle cx="640.5" cy="1894.0" r="6.8" fill="#ee1d1d"/><circle cx="1012.0" cy="1894.0" r="6.8" fill="#ee1d1d"/><circle cx="1383.5" cy="1894.0" r="6.8" fill="#ee1d1d"/><circle cx="1755.0" cy="1894.0" r="6.8" fill="#ee1d1d"/><circle cx="2126.5" cy="1894.0" r="6.8" fill="#ee1d1d"/><circle cx="2498.0" cy="1893.6" r="6.8" fill="#ee1d1d"/><circle cx="2869.5" cy="1887.3" r="6.8" fill="#ee1d1d"/><circle cx="3241.0" cy="1887.3" r="6.8" fill="#ee1d1d"/><polyline points="269.0,1777.4 640.5,1776.5 1012.0,1776.5 1383.5,1775.0 1755.0,1775.0 2126.5,1775.0 2498.0,1773.2 2869.5,1773.2 3241.0,1773.2" fill="none" stroke="#fcc41d" stroke-width="3.2" stroke-linejoin="round"/><circle cx="269.0" cy="1777.4" r="6.8" fill="#fcc41d"/><circle cx="640.5" cy="1776.5" r="6.8" fill="#fcc41d"/><circle cx="1012.0" cy="1776.5" r="6.8" fill="#fcc41d"/><circle cx="1383.5" cy="1775.0" r="6.8" fill="#fcc41d"/><circle cx="1755.0" cy="1775.0" r="6.8" fill="#fcc41d"/><circle cx="2126.5" cy="1775.0" r="6.8" fill="#fcc41d"/><circle cx="2498.0" cy="1773.2" r="6.8" fill="#fcc41d"/><circle cx="2869.5" cy="1773.2" r="6.8" fill="#fcc41d"/><circle cx="3241.0" cy="1773.2" r="6.8" fill="#fcc41d"/></svg><div class="t" style="right:3116.0px;top:1321.4px;font-size:24px;color:#8a98a2;font-weight:400;letter-spacing:0px;">10</div><div class="t" style="right:3116.0px;top:1439.0px;font-size:24px;color:#8a98a2;font-weight:400;letter-spacing:0px;">0</div><div class="t" style="left:-231.0px;width:1000px;text-align:center;top:1466.4px;font-size:24px;color:#8a98a2;font-weight:400;letter-spacing:-0.3px;">11</div><div class="t" style="left:140.5px;width:1000px;text-align:center;top:1466.4px;font-size:24px;color:#8a98a2;font-weight:400;letter-spacing:-0.3px;">12</div><div class="t" style="left:512.0px;width:1000px;text-align:center;top:1466.4px;font-size:24px;color:#8a98a2;font-weight:400;letter-spacing:-0.3px;">13</div><div class="t" style="left:883.5px;width:1000px;text-align:center;top:1466.4px;font-size:24px;color:#8a98a2;font-weight:400;letter-spacing:-0.3px;">14</div><div class="t" style="left:1255.0px;width:1000px;text-align:center;top:1466.4px;font-size:24px;color:#8a98a2;font-weight:400;letter-spacing:-0.3px;">15</div><div class="t" style="left:1626.5px;width:1000px;text-align:center;top:1466.4px;font-size:24px;color:#8a98a2;font-weight:400;letter-spacing:-0.3px;">16</div><div class="t" style="left:1998.0px;width:1000px;text-align:center;top:1466.4px;font-size:24px;color:#8a98a2;font-weight:400;letter-spacing:-0.3px;">17</div><div class="t" style="left:2369.5px;width:1000px;text-align:center;top:1466.4px;font-size:24px;color:#8a98a2;font-weight:400;letter-spacing:-0.3px;">18</div><div class="t" style="left:2741.0px;width:1000px;text-align:center;top:1466.4px;font-size:24px;color:#8a98a2;font-weight:400;letter-spacing:-0.3px;">19</div><div class="t" style="right:3116.0px;top:1771.7px;font-size:24px;color:#8a98a2;font-weight:400;letter-spacing:0px;">50</div><div class="t" style="right:3116.0px;top:1883.7px;font-size:24px;color:#8a98a2;font-weight:400;letter-spacing:0px;">10</div>
</body></html>
